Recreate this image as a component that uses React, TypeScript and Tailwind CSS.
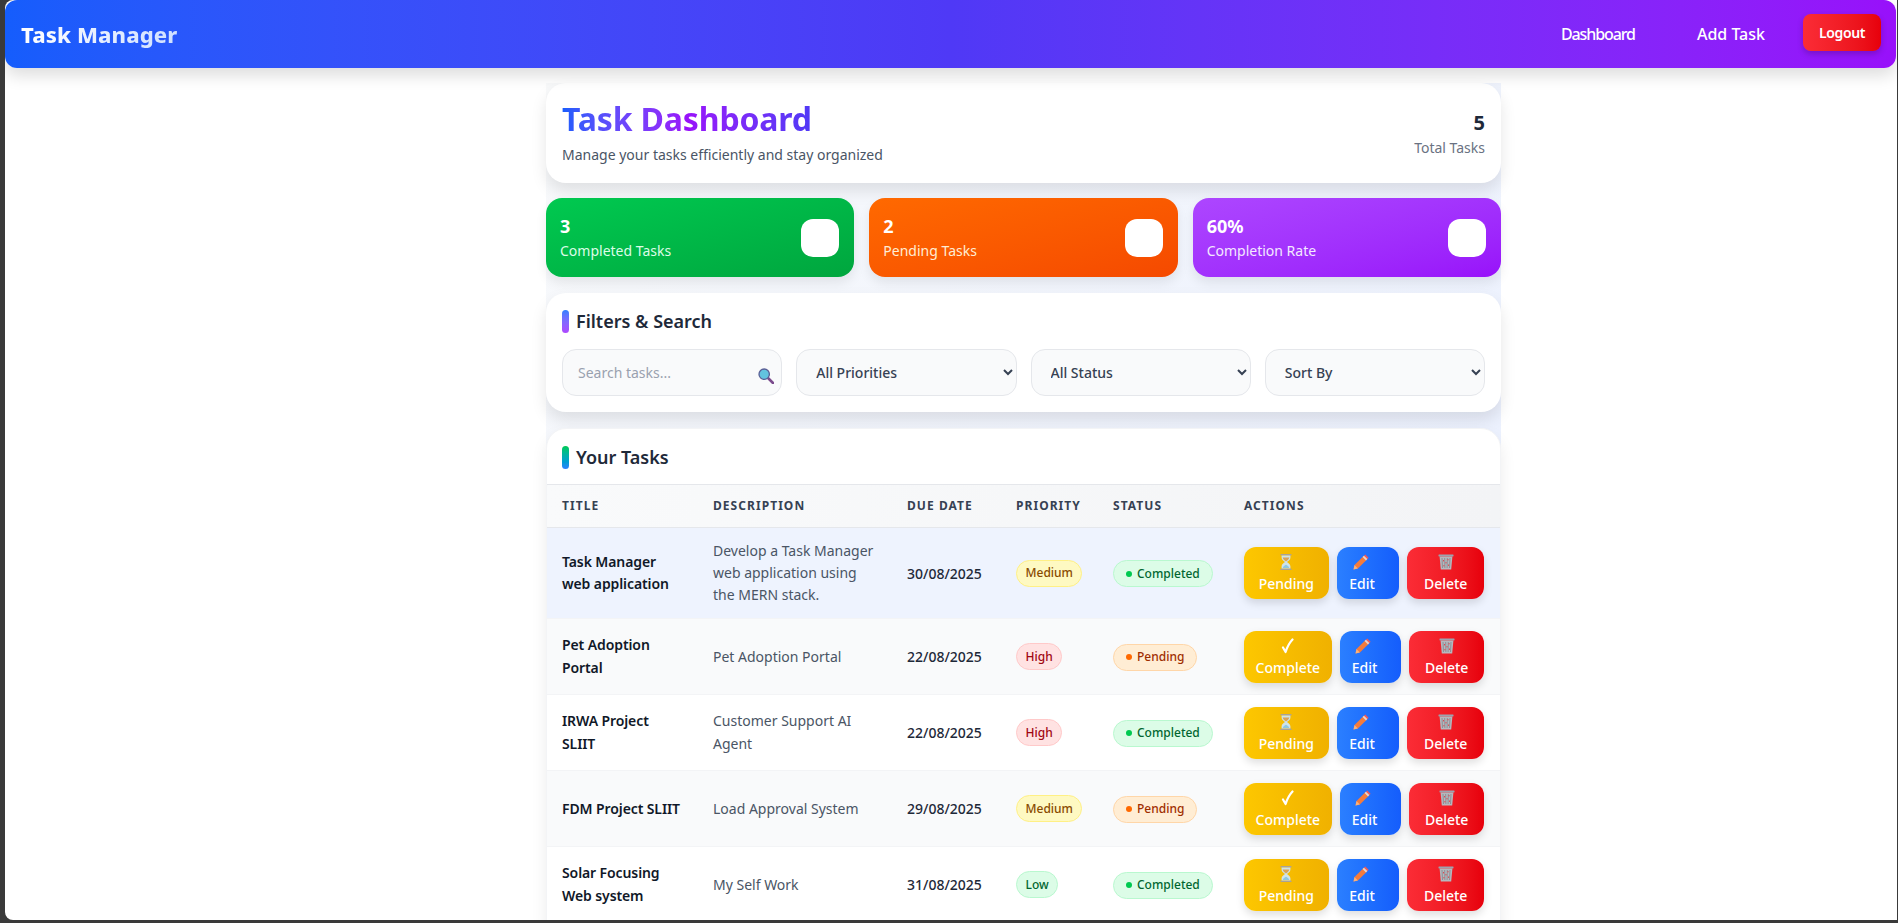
import React from "react";

const font = { fontFamily: '"Noto Sans", "Open Sans", sans-serif' };

function Hourglass() {
  return (
    <svg width="12" height="16" viewBox="0 0 12 16" className="block">
      <rect x="0.5" y="0" width="11" height="1.6" rx="0.5" fill="#a8a29a" />
      <rect x="0.5" y="14.4" width="11" height="1.6" rx="0.5" fill="#a8a29a" />
      <path d="M1.6 1.6h8.8v2.2C10.4 6 8 7 7 8c1 1 3.4 2 3.4 4.2v2.2H1.6v-2.2C1.6 10 4 9 5 8 4 7 1.6 6 1.6 3.8z" fill="#cfe3ea" />
      <path d="M2.6 3.5h6.8C9 5.5 7 6.5 6 7.6 5 6.5 3 5.5 2.6 3.5z" fill="#d9a45a" />
      <path d="M2.8 14c.3-1.8 2-2.6 3.2-3.2 1.2.6 2.9 1.4 3.2 3.2z" fill="#8fc7e0" />
    </svg>
  );
}

function Pencil() {
  return (
    <svg width="16" height="16" viewBox="0 0 16 16" className="block">
      <path d="M0.5 15.5l1-4.4L10.6 2l3.4 3.4-9.1 9.1z" fill="#f47b3c" />
      <path d="M0.5 15.5l1-4.4 3.4 3.4z" fill="#f9b27c" />
      <path d="M10.6 2l1.7-1.6 3.3 3.3L14 5.4z" fill="#ee5a5a" />
      <path d="M9.6 3l1.3-1.3 3.4 3.4L13 6.4z" fill="#e5d8d0" />
    </svg>
  );
}

function Trash() {
  return (
    <svg width="16" height="16" viewBox="0 0 16 16" className="block">
      <rect x="0.5" y="0.5" width="15" height="2" rx="0.4" fill="#9ca3af" />
      <path d="M1.6 2.5h12.8l-1.2 13H2.8z" fill="#b5b8be" />
      <path d="M4 4l.5 10M6.7 4l.2 10M9.3 4l-.2 10M12 4l-.5 10" stroke="#8d9097" strokeWidth="1" />
      <g fill="#e0484f">
        <rect x="5" y="6" width="1" height="1.4" />
        <rect x="9.5" y="5" width="1" height="1.4" />
        <rect x="7.5" y="8" width="1" height="1.4" />
        <rect x="5.4" y="11" width="1" height="1.4" />
        <rect x="10" y="10.5" width="1" height="1.4" />
      </g>
    </svg>
  );
}

function Check() {
  return (
    <svg width="13" height="16" viewBox="0 0 13 16" className="block">
      <path d="M2 9.5l2.6 4.5C6.2 9 8.6 4.6 11.5 1.5" fill="none" stroke="#ffffff" strokeWidth="2.2" strokeLinecap="round" strokeLinejoin="round" />
    </svg>
  );
}

function Magnifier() {
  return (
    <svg width="16" height="16" viewBox="0 0 16 16">
      <path d="M10 10l5 5" stroke="#7a4a8c" strokeWidth="2.6" strokeLinecap="round" />
      <circle cx="6.2" cy="6.2" r="5.2" fill="#62c3df" stroke="#5a5f96" strokeWidth="1.3" />
    </svg>
  );
}

type Task = {
  title: string[];
  desc: string[];
  date: string;
  priority: "Medium" | "High" | "Low";
  done: boolean;
  bg: string;
  widths: string[];
};

const tasks: Task[] = [
  { title: ["Task Manager", "web application"], desc: ["Develop a Task Manager", "web application using", "the MERN stack."], date: "30/08/2025", priority: "Medium", done: true, bg: "bg-[#eef3fe]", widths: ["w-[85px]", "w-[63px]", "w-[77px]"] },
  { title: ["Pet Adoption", "Portal"], desc: ["Pet Adoption Portal"], date: "22/08/2025", priority: "High", done: false, bg: "bg-[#f9fafb]", widths: ["w-[88px]", "w-[62px]", "w-[75px]"] },
  { title: ["IRWA Project", "SLIIT"], desc: ["Customer Support AI", "Agent"], date: "22/08/2025", priority: "High", done: true, bg: "bg-white", widths: ["w-[85px]", "w-[63px]", "w-[77px]"] },
  { title: ["FDM Project SLIIT"], desc: ["Load Approval System"], date: "29/08/2025", priority: "Medium", done: false, bg: "bg-[#f9fafb]", widths: ["w-[88px]", "w-[62px]", "w-[75px]"] },
  { title: ["Solar Focusing", "Web system"], desc: ["My Self Work"], date: "31/08/2025", priority: "Low", done: true, bg: "bg-white", widths: ["w-[85px]", "w-[63px]", "w-[77px]"] },
];

const priorityClass = {
  Medium: "bg-[#fef9c2] text-[#894b00] border-[#fff085]",
  High: "bg-[#ffe2e2] text-[#9f0712] border-[#ffc9c9]",
  Low: "bg-[#dcfce7] text-[#016630] border-[#b9f8cf]",
};

function ActionButton({ icon, label, cls, iconCls = "", labelCls = "" }: { icon: React.ReactNode; label: string; cls: string; iconCls?: string; labelCls?: string }) {
  return (
    <button className={`h-[52px] rounded-xl flex flex-col items-center justify-start pt-[7px] text-white text-[14px] font-medium shadow-[0_4px_8px_rgba(0,0,0,0.13)] ${cls}`}>
      <span className={iconCls}>{icon}</span>
      <span className={`leading-[20px] mt-[4px] ${labelCls}`}>{label}</span>
    </button>
  );
}

function Stat({ value, label, cls, labelCls }: { value: string; label: string; cls: string; labelCls: string }) {
  return (
    <div className={`flex-1 h-[79px] rounded-2xl pl-[14px] pr-[15px] flex items-center justify-between shadow-[0_6px_12px_rgba(0,0,0,0.08)] ${cls}`}>
      <div>
        <div className="text-[18px] font-bold text-white leading-[24px]">{value}</div>
        <div className={`text-[14px] leading-[22px] mt-[2px] ${labelCls}`}>{label}</div>
      </div>
      <div className="w-[38px] h-[38px] rounded-xl bg-white" />
    </div>
  );
}

function Section({ label, bar }: { label: string; bar: string }) {
  return (
    <div className="flex items-center gap-[7px]">
      <span className={`w-[7px] h-[23px] rounded-full ${bar}`} />
      <h2 className="text-[18px] font-semibold text-[#1e2939] leading-[24px]">{label}</h2>
    </div>
  );
}

const control = "w-full min-w-0 h-[47px] rounded-[14px] border border-[#e5e7eb] bg-[#f9fafb] pl-[15px] text-[14px] font-medium text-[#364153] outline-none";

export default function App() {
  return (
    <div style={font} className="h-[923px] w-[1898px] overflow-hidden bg-[#3a3a3a] pl-[5px] pr-[1px] pb-[3px]">
      <div className="h-full bg-white rounded-l-lg overflow-hidden relative">
        <header className="relative z-10 w-[1891px] h-[68px] rounded-xl bg-linear-to-r from-[#155dfc] via-[#4f39f6] to-[#9810fa] flex items-center pl-[16px] pr-[15px] shadow-[0_8px_16px_rgba(0,0,0,0.13)]">
          <div className="text-[22px] font-extrabold tracking-[0.1px] bg-linear-to-r from-white to-[#cfe0ff] bg-clip-text text-transparent">Task Manager</div>
          <nav className="ml-auto flex items-center text-white text-[16px] font-medium">
            <a className="mr-[62px] tracking-[-1.1px]">Dashboard</a>
            <a className="mr-[38px]">Add Task</a>
            <button className="w-[78px] h-[37px] mb-[3px] rounded-lg bg-linear-to-r from-[#fb2c36] to-[#e7000b] text-[14px] font-semibold tracking-[-0.4px] shadow-[0_3px_6px_rgba(0,0,0,0.2)]">Logout</button>
          </nav>
        </header>

        <main className="ml-[541px] w-[955px] mt-[15px] h-[900px] bg-linear-to-br from-[#f9fafb] to-[#e6edff] flex flex-col gap-[15px]">
          <section className="h-[100px] rounded-[20px] bg-white px-[16px] flex justify-between shadow-[0_8px_16px_rgba(0,0,0,0.1)]">
            <div className="pt-[18px]">
              <h1 className="text-[32px] font-bold leading-[36px] tracking-[-0.15px] w-fit bg-linear-to-r from-[#155dfc] via-[#9810fa] to-[#4f39f6] bg-clip-text text-transparent">Task Dashboard</h1>
              <p className="text-[14px] text-[#4a5565] leading-[20px] mt-[8px]">Manage your tasks efficiently and stay organized</p>
            </div>
            <div className="pt-[26px] text-right">
              <div className="text-[20px] font-bold text-[#1e2939] leading-[28px]">5</div>
              <div className="text-[14px] text-[#6a7282] leading-[20px] mt-[1px]">Total Tasks</div>
            </div>
          </section>

          <section className="flex gap-[15px] mb-[1px]">
            <Stat value="3" label="Completed Tasks" cls="bg-linear-to-br from-[#00c950] to-[#00a63e]" labelCls="text-[#dcfce7]" />
            <Stat value="2" label="Pending Tasks" cls="bg-linear-to-br from-[#ff6900] to-[#f54900]" labelCls="text-[#ffedd4]" />
            <Stat value="60%" label="Completion Rate" cls="bg-linear-to-br from-[#ad46ff] to-[#9810fa]" labelCls="text-[#f3e8ff]" />
          </section>

          <section className="h-[119px] mb-[1px] rounded-[20px] bg-white px-[16px] pt-[16px] shadow-[0_8px_16px_rgba(0,0,0,0.1)]">
            <Section label="Filters & Search" bar="bg-linear-to-b from-[#2b7fff] to-[#ad46ff]" />
            <div className="grid grid-cols-4 gap-[14px] mt-[16px]">
              <div className="relative min-w-0 flex">
                <input placeholder="Search tasks..." className={`${control} font-normal placeholder:text-[#99a1af]`} />
                <span className="absolute right-[8px] top-[19px]"><Magnifier /></span>
              </div>
              <select className={control} defaultValue="a"><option value="a">All Priorities</option></select>
              <select className={control} defaultValue="a"><option value="a">All Status</option></select>
              <select className={control} defaultValue="a"><option value="a">Sort By</option></select>
            </div>
          </section>

          <section className="rounded-t-[20px] bg-white border border-[#f3f4f6] shadow-[0_8px_16px_rgba(0,0,0,0.08)]">
            <div className="h-[55px] pl-[15px] pt-[16px]">
              <Section label="Your Tasks" bar="bg-linear-to-b from-[#00c950] to-[#2b7fff]" />
            </div>
            <table className="w-full table-fixed border-collapse">
              <colgroup>
                <col className="w-[150px]" />
                <col className="w-[194px]" />
                <col className="w-[109px]" />
                <col className="w-[97px]" />
                <col className="w-[131px]" />
                <col className="w-[272px]" />
              </colgroup>
              <thead>
                <tr className="h-[43px] bg-linear-to-r from-[#f9fafb] to-[#f3f4f6] border-y border-[#e5e7eb]">
                  {["Title", "Description", "Due Date", "Priority", "Status", "Actions"].map((h) => (
                    <th key={h} className="text-left pl-[16px] first:pl-[15px] text-[12px] font-bold uppercase tracking-[1.05px] text-[#364153]">{h}</th>
                  ))}
                </tr>
              </thead>
              <tbody>
                {tasks.map((t) => (
                  <tr key={t.date + t.title[0]} className={`${t.bg} border-b border-[#f3f4f6]`}>
                    <td className="pl-[15px] py-[11.5px] text-[14px] font-semibold text-[#101828] tracking-[-0.1px] leading-[22.4px] whitespace-nowrap">
                      {t.title.map((l) => <div key={l}>{l}</div>)}
                    </td>
                    <td className="pl-[16px] py-[11.5px] text-[14px] text-[#4a5565] leading-[22.4px] whitespace-nowrap">
                      {t.desc.map((l) => <div key={l}>{l}</div>)}
                    </td>
                    <td className="pl-[16px] py-[11.5px] text-[14px] font-medium text-[#1e2939] whitespace-nowrap">{t.date}</td>
                    <td className="pl-[16px] py-[11.5px]">
                      <span className={`inline-flex items-center h-[27px] px-[8.5px] rounded-full border text-[12px] font-medium ${priorityClass[t.priority]}`}>{t.priority}</span>
                    </td>
                    <td className="pl-[16px] py-[11.5px]">
                      <span className={`inline-flex items-center gap-[5px] h-[27px] px-[12px] rounded-full border text-[12px] font-medium ${t.done ? "bg-[#dcfce7] text-[#016630] border-[#b9f8cf]" : "bg-[#ffedd4] text-[#9f2d00] border-[#ffd6a8]"}`}>
                        <span className={`w-[6px] h-[6px] rounded-full ${t.done ? "bg-[#00c950]" : "bg-[#ff6900]"}`} />
                        {t.done ? "Completed" : "Pending"}
                      </span>
                    </td>
                    <td className="pl-[16px] pr-[16px] py-[11.5px]">
                      <div className="flex gap-[8px]">
                        <ActionButton icon={t.done ? <Hourglass /> : <Check />} label={t.done ? "Pending" : "Complete"} cls={`${t.widths[0]} bg-linear-to-r from-[#fdc700] to-[#f0b100]`} />
                        <ActionButton icon={<Pencil />} label="Edit" iconCls="mr-[14px]" labelCls="mr-[12px]" cls={`${t.widths[1]} bg-linear-to-r from-[#2b7fff] to-[#155dfc]`} />
                        <ActionButton icon={<Trash />} label="Delete" cls={`${t.widths[2]} bg-linear-to-r from-[#fb2c36] to-[#e7000b]`} />
                      </div>
                    </td>
                  </tr>
                ))}
              </tbody>
            </table>
          </section>
        </main>
      </div>
    </div>
  );
}
